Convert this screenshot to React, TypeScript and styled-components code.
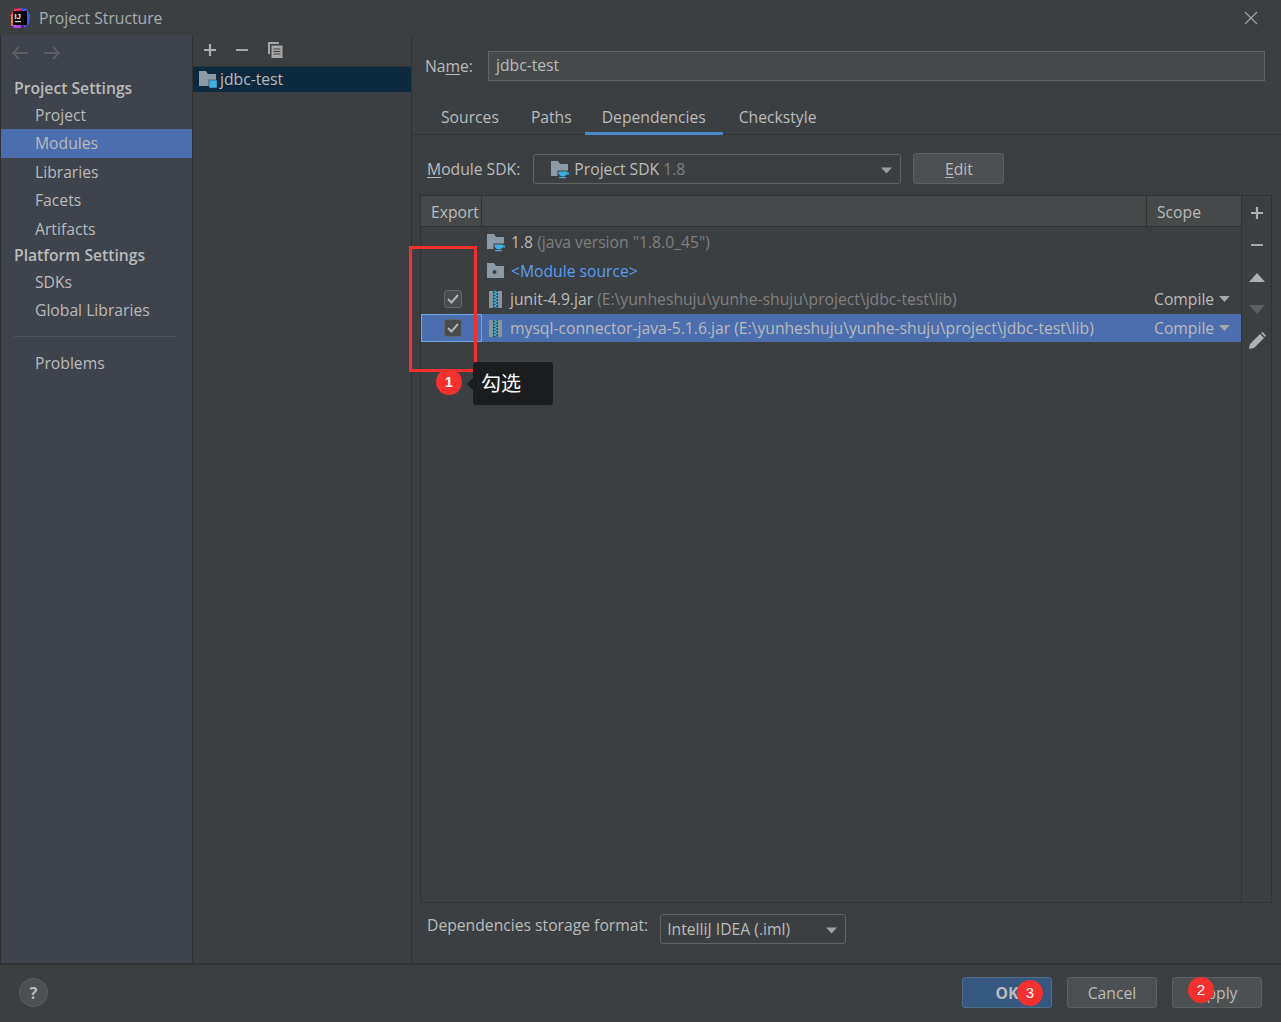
import React from "react";
import styled, { createGlobalStyle } from "styled-components";

const GlobalStyle = createGlobalStyle`
  html, body {
    margin: 0;
    padding: 0;
    background: #3c3f41;
  }
  * {
    box-sizing: border-box;
  }
`;

const Logo = () => (
  <svg width="22" height="22" viewBox="0 0 22 22">
    <path d="M1 9 L5 2 L12 1 L12 6 L5 12 Z" fill="#fe2857" />
    <path d="M11 1 L18 2 L21 8 L20 17 L15 21 L14 6 Z" fill="#3b5bf0" />
    <path d="M2 8 L6 8 L6 19 L2 19 Z" fill="#f97a12" />
    <path d="M3 18 L12 18 L12 21 L5 21 Z" fill="#b74af7" />
    <rect x="4" y="4" width="14" height="14" fill="#000" />
    <rect x="6" y="14" width="6" height="1.2" fill="#ddd" />
    <text x="5.6" y="11.5" fontSize="7.5" fontWeight="700" fill="#fff" fontFamily="Liberation Sans, sans-serif">IJ</text>
  </svg>
);

const FolderIcon = ({ cup, badge, dot }: { cup?: boolean; badge?: boolean; dot?: boolean }) => (
  <svg width="20" height="20" viewBox="0 0 20 20">
    <path d="M1 2 H8 L10 5 H18 V17 H1 Z" fill="#8c9aa5" />
    {dot && <circle cx="8.5" cy="11" r="2" fill="#3c3f41" />}
    {cup && (
      <>
        <path d="M7.5 11.5 H19.5 V19.5 H7.5 Z" fill="#3c3f41" />
        <path d="M8.5 12.5 H17 V13.5 H19 V15.5 H16.5 Q15.5 17.5 13 17.5 Q10 17.5 8.5 14.5 Z" fill="#3daee0" />
        <path d="M9 18 H16 V19.2 H9 Z" fill="#3daee0" />
      </>
    )}
    {badge && <rect x="11" y="11" width="8" height="8" fill="#3db3e6" stroke="#2b3a45" strokeWidth="0.6" />}
  </svg>
);

const JarIcon = () => (
  <svg width="19" height="18" viewBox="0 0 19 18">
    <rect x="3" y="1" width="13" height="17" fill="#8a949a" />
    <rect x="7" y="1" width="5" height="17" fill="#2f4650" />
    <path
      d="M8 1 L11 2.5 L8 4 L11 5.5 L8 7 L11 8.5 L8 10 L11 11.5 L8 13 L11 14.5 L8 16 L11 17.5"
      fill="none"
      stroke="#3fb6de"
      strokeWidth="1.2"
    />
  </svg>
);

const PlusIcon = () => (
  <svg width="14" height="14" viewBox="0 0 14 14">
    <path d="M7 1 V13 M1 7 H13" stroke="#b0b0b0" strokeWidth="2.2" />
  </svg>
);

const MinusIcon = () => (
  <svg width="14" height="14" viewBox="0 0 14 14">
    <path d="M1 7 H13" stroke="#a8a8a8" strokeWidth="2" />
  </svg>
);

const CopyIcon = () => (
  <svg width="16" height="18" viewBox="0 0 16 18">
    <path d="M1 1 H12 V3 H3 V13 H1 Z" fill="#a8a8a8" />
    <path d="M4.5 4.5 H15.5 V17 H4.5 Z" fill="#a8a8a8" />
    <path d="M6.5 8 H13.5 M6.5 10.5 H13.5 M6.5 13 H13.5" stroke="#3c3f41" strokeWidth="1.1" />
  </svg>
);

const ArrowIcon = ({ flip }: { flip?: boolean }) => (
  <svg width="18" height="14" viewBox="0 0 18 14" style={flip ? { transform: "scaleX(-1)" } : undefined}>
    <path d="M17 7 H2 M8 1 L2 7 L8 13" fill="none" stroke="#5b5e62" strokeWidth="2" />
  </svg>
);

const TriangleIcon = ({ up, color }: { up?: boolean; color: string }) => (
  <svg width="16" height="9" viewBox="0 0 16 9">
    <path d={up ? "M8 0 L16 9 H0 Z" : "M0 0 H16 L8 9 Z"} fill={color} />
  </svg>
);

const PencilIcon = () => (
  <svg width="18" height="18" viewBox="0 0 18 18">
    <path d="M1 17 L2 12 L12 2 L16 6 L6 16 Z" fill="#b0b0b0" />
    <path d="M13 1 L14.5 0 L18 3.5 L17 5 Z" fill="#b0b0b0" />
  </svg>
);

const CheckIcon = () => (
  <svg width="12" height="10" viewBox="0 0 12 10">
    <path d="M1 5 L4.5 8.5 L11 1" fill="none" stroke="#b4b4b4" strokeWidth="2" />
  </svg>
);

const settings = ["Project", "Modules", "Libraries", "Facets", "Artifacts"];
const platform = ["SDKs", "Global Libraries"];
const tabs = ["Sources", "Paths", "Dependencies", "Checkstyle"];

export default function App() {
  return (
    <>
      <GlobalStyle />
      <Window>
        <TitleBar>
          <Logo />
          <TitleText>Project Structure</TitleText>
          <CloseButton viewBox="0 0 14 14">
            <path d="M1 1 L13 13 M13 1 L1 13" stroke="#a0a0a0" strokeWidth="1.3" />
          </CloseButton>
        </TitleBar>

        <Body>
          <Sidebar>
            <NavArrows>
              <ArrowIcon />
              <ArrowIcon flip />
            </NavArrows>
            <SectionTitle>Project Settings</SectionTitle>
            {settings.map((item) => (
              <NavItem key={item} $active={item === "Modules"}>
                {item}
              </NavItem>
            ))}
            <PlatformTitle>Platform Settings</PlatformTitle>
            {platform.map((item) => (
              <NavItem key={item}>{item}</NavItem>
            ))}
            <NavDivider />
            <NavItem>Problems</NavItem>
          </Sidebar>

          <ModuleColumn>
            <ModuleToolbar>
              <PlusIcon />
              <MinusIcon />
              <CopyIcon />
            </ModuleToolbar>
            <ModuleRow>
              <FolderIcon badge />
              <span>jdbc-test</span>
            </ModuleRow>
          </ModuleColumn>

          <Detail>
            <NameRow>
              <NameLabel>
                Na<u>m</u>e:
              </NameLabel>
              <NameInput>jdbc-test</NameInput>
            </NameRow>

            <Tabs>
              {tabs.map((tab) => (
                <Tab key={tab} $active={tab === "Dependencies"}>
                  {tab}
                </Tab>
              ))}
            </Tabs>

            <SdkRow>
              <FieldLabel>
                <u>M</u>odule SDK:
              </FieldLabel>
              <SdkSelect>
                <FolderIcon cup />
                <span>
                  Project SDK <Muted>1.8</Muted>
                </span>
                <SelectCaret>
                  <TriangleIcon color="#a0a0a0" />
                </SelectCaret>
              </SdkSelect>
              <EditButton>
                <u>E</u>dit
              </EditButton>
            </SdkRow>

            <TableFrame>
              <TableMain>
                <TableHeader>
                  <ExportHead>Export</ExportHead>
                  <NameHead />
                  <ScopeHead>Scope</ScopeHead>
                </TableHeader>
                <TableRows>
                  <Row>
                    <ExportCell />
                    <EntryCell>
                      <FolderIcon cup />
                      <span>
                        1.8 <Muted>(java version "1.8.0_45")</Muted>
                      </span>
                    </EntryCell>
                  </Row>
                  <Row>
                    <ExportCell />
                    <EntryCell>
                      <FolderIcon dot />
                      <LinkText>&lt;Module source&gt;</LinkText>
                    </EntryCell>
                  </Row>
                  <Row>
                    <ExportCell>
                      <CheckBox>
                        <CheckIcon />
                      </CheckBox>
                    </ExportCell>
                    <EntryCell>
                      <JarIcon />
                      <span>
                        junit-4.9.jar <Muted>(E:\yunheshuju\yunhe-shuju\project\jdbc-test\lib)</Muted>
                      </span>
                    </EntryCell>
                    <ScopeCell>
                      Compile <TriangleIcon color="#a8a8a8" />
                    </ScopeCell>
                  </Row>
                  <Row $selected>
                    <ExportCell $focused>
                      <CheckBox>
                        <CheckIcon />
                      </CheckBox>
                    </ExportCell>
                    <EntryCell>
                      <JarIcon />
                      <span>mysql-connector-java-5.1.6.jar (E:\yunheshuju\yunhe-shuju\project\jdbc-test\lib)</span>
                    </EntryCell>
                    <ScopeCell>
                      Compile <TriangleIcon color="#a8a8a8" />
                    </ScopeCell>
                  </Row>
                </TableRows>
              </TableMain>
              <SideTools>
                <ToolSlot>
                  <PlusIcon />
                </ToolSlot>
                <ToolSlot>
                  <MinusIcon />
                </ToolSlot>
                <ToolSlot>
                  <TriangleIcon up color="#b0b0b0" />
                </ToolSlot>
                <ToolSlot>
                  <TriangleIcon color="#5b5e62" />
                </ToolSlot>
                <ToolSlot>
                  <PencilIcon />
                </ToolSlot>
              </SideTools>
            </TableFrame>

            <StorageRow>
              <StorageLabel>Dependencies storage format:</StorageLabel>
              <StorageSelect>
                <span>IntelliJ IDEA (.iml)</span>
                <SelectCaret>
                  <TriangleIcon color="#a0a0a0" />
                </SelectCaret>
              </StorageSelect>
            </StorageRow>
          </Detail>
        </Body>

        <Footer>
          <HelpButton>?</HelpButton>
          <FooterButtons>
            <OkButton>
              OK
              <OkBadge>3</OkBadge>
            </OkButton>
            <DialogButton>Cancel</DialogButton>
            <DialogButton>
              Apply
              <ApplyBadge>2</ApplyBadge>
            </DialogButton>
          </FooterButtons>
        </Footer>

        <RedBox />
        <StepBadge>1</StepBadge>
        <Tip>勾选</Tip>
      </Window>
    </>
  );
}

const Window = styled.div`
  position: relative;
  width: 1281px;
  height: 1022px;
  overflow: hidden;
  display: flex;
  flex-direction: column;
  background: #3c3f41;
  color: #bbbbbb;
  font-family: "Open Sans", "Noto Sans CJK SC", sans-serif;
  font-size: 15.7px;

  u {
    text-underline-offset: 2px;
  }
`;

const TitleBar = styled.div`
  height: 35px;
  flex: none;
  display: flex;
  align-items: center;
  padding: 0 23px 0 9px;
  gap: 8px;
`;

const TitleText = styled.span`
  flex: 1;
  color: #a9adb0;
`;

const CloseButton = styled.svg`
  width: 14px;
  height: 14px;
`;

const Body = styled.div`
  flex: 1;
  min-height: 0;
  display: flex;
`;

const Sidebar = styled.nav`
  width: 193px;
  flex: none;
  background: #3e434c;
  border-left: 1px solid #2f3133;
  border-right: 1px solid #323232;
  display: flex;
  flex-direction: column;
`;

const NavArrows = styled.div`
  height: 35px;
  flex: none;
  margin-bottom: 5px;
  display: flex;
  align-items: center;
  gap: 14px;
  padding: 0 0 0 10px;
`;

const SectionTitle = styled.div`
  height: 26px;
  line-height: 26px;
  padding-left: 13px;
  font-weight: 600;
`;

const PlatformTitle = styled(SectionTitle)`
  height: 25px;
  line-height: 25px;
`;

const NavItem = styled.div<{ $active?: boolean }>`
  height: 28.4px;
  line-height: 28px;
  padding-left: 34px;
  background: ${(p) => (p.$active ? "#4b6eaf" : "transparent")};
`;

const NavDivider = styled.div`
  height: 1px;
  flex: none;
  margin: 11px 16px 12px 13px;
  background: #505357;
`;

const ModuleColumn = styled.div`
  width: 219px;
  flex: none;
  border-right: 1px solid #323232;
`;

const ModuleToolbar = styled.div`
  height: 32px;
  display: flex;
  align-items: center;
  gap: 18px;
  padding: 0 0 2px 10px;
  border-bottom: 1px solid #323232;
`;

const ModuleRow = styled.div`
  height: 25px;
  display: flex;
  align-items: center;
  gap: 2px;
  padding: 0 0 2px 5px;
  background: #0d293e;
`;

const Detail = styled.div`
  flex: 1;
  min-width: 0;
  display: flex;
  flex-direction: column;
`;

const NameRow = styled.div`
  display: flex;
  align-items: center;
  gap: 16px;
  padding: 16px 16px 0 13px;
`;

const NameLabel = styled.span`
  width: 47px;
  white-space: nowrap;
`;

const NameInput = styled.div`
  flex: 1;
  height: 30px;
  line-height: 27px;
  padding-left: 7px;
  background: #45494a;
  border: 1px solid #646464;
`;

const Tabs = styled.div`
  display: flex;
  height: 36px;
  margin-top: 18px;
  padding-left: 13px;
  border-bottom: 1px solid #323232;
`;

const Tab = styled.div<{ $active?: boolean }>`
  height: 36px;
  line-height: 36px;
  padding: 0 ${(p) => (p.$active ? "17px" : "16px")};
  margin-left: ${(p) => (p.$active ? "-3px" : "0")};
  border-bottom: 3px solid ${(p) => (p.$active ? "#4a88c7" : "transparent")};
`;

const SdkRow = styled.div`
  display: flex;
  align-items: center;
  padding: 18px 0 0 15px;
`;

const FieldLabel = styled.span`
  white-space: nowrap;
`;

const StorageLabel = styled(FieldLabel)`
  margin-bottom: 8px;
`;

const Select = styled.div`
  position: relative;
  height: 30px;
  display: flex;
  align-items: center;
  border: 1px solid #646464;
  border-radius: 3px;
  background: #3c3f41;
`;

const SdkSelect = styled(Select)`
  width: 368px;
  margin-left: 13px;
  padding-left: 16px;
  gap: 4px;
`;

const StorageSelect = styled(Select)`
  width: 186px;
  margin-left: 12px;
  padding-left: 6px;
`;

const SelectCaret = styled.span`
  position: absolute;
  right: 8px;
  top: 12px;
  display: flex;

  svg {
    width: 11px;
    height: 7px;
  }
`;

const Muted = styled.span`
  color: #808080;
`;

const EditButton = styled.div`
  width: 91px;
  height: 31px;
  margin-left: 12px;
  line-height: 31px;
  text-align: center;
  background: #4c5052;
  border: 1px solid #5e6060;
  border-radius: 3px;
`;

const TableFrame = styled.div`
  height: 708px;
  margin: 11px 9px 0 8px;
  display: flex;
  border: 1px solid #323232;
`;

const TableMain = styled.div`
  flex: 1;
  min-width: 0;
  display: flex;
  flex-direction: column;
  border-right: 1px solid #323232;
`;

const TableHeader = styled.div`
  height: 31px;
  flex: none;
  display: flex;
  align-items: stretch;
  background: #45494a;
  border-bottom: 1px solid #323232;
`;

const ExportHead = styled.div`
  width: 61px;
  line-height: 33px;
  padding-left: 10px;
  white-space: nowrap;
  border-right: 1px solid #323232;
`;

const NameHead = styled.div`
  flex: 1;
`;

const ScopeHead = styled.div`
  width: 95px;
  line-height: 33px;
  padding-left: 10px;
  border-left: 1px solid #323232;
`;

const TableRows = styled.div`
  padding-top: 1px;
`;

const Row = styled.div<{ $selected?: boolean }>`
  height: 28.5px;
  display: flex;
  align-items: center;
  background: ${(p) => (p.$selected ? "#4b6eaf" : "transparent")};
`;

const ExportCell = styled.div<{ $focused?: boolean }>`
  width: 61px;
  height: 100%;
  flex: none;
  display: flex;
  align-items: center;
  justify-content: center;
  padding-left: 2px;
  border: 1px solid ${(p) => (p.$focused ? "#6ea8e6" : "transparent")};
`;

const CheckBox = styled.div`
  width: 18px;
  height: 18px;
  display: flex;
  align-items: center;
  justify-content: center;
  background: #474b4d;
  border: 1px solid #686868;
  border-radius: 3px;
`;

const EntryCell = styled.div`
  flex: 1;
  min-width: 0;
  display: flex;
  align-items: center;
  gap: 5px;
  padding-left: 4px;
  white-space: nowrap;
`;

const LinkText = styled.span`
  color: #589df6;
`;

const ScopeCell = styled.div`
  width: 87px;
  flex: none;
  display: flex;
  align-items: center;
  gap: 5px;
  white-space: nowrap;

  svg {
    width: 11px;
    height: 6px;
  }
`;

const SideTools = styled.div`
  width: 29px;
  flex: none;
  display: flex;
  flex-direction: column;
  align-items: stretch;
  padding-top: 1px;
`;

const ToolSlot = styled.div`
  height: 32px;
  display: flex;
  align-items: center;
  justify-content: center;
`;

const StorageRow = styled.div`
  display: flex;
  align-items: center;
  padding: 11px 0 0 15px;
`;

const Footer = styled.div`
  height: 59px;
  flex: none;
  display: flex;
  align-items: center;
  justify-content: space-between;
  padding: 0 19px 2px 19px;
  border-top: 2px solid #323232;
`;

const HelpButton = styled.div`
  width: 29px;
  height: 29px;
  line-height: 29px;
  text-align: center;
  font-weight: 700;
  font-size: 16px;
  border-radius: 50%;
  background: #4c5052;
  border: 1px solid #5e6060;
`;

const FooterButtons = styled.div`
  display: flex;
  gap: 15px;
`;

const DialogButton = styled.div`
  position: relative;
  width: 90px;
  height: 31px;
  line-height: 30px;
  text-align: center;
  background: #4c5052;
  border: 1px solid #5e6060;
  border-radius: 3px;
`;

const OkButton = styled(DialogButton)`
  background: #365880;
  border-color: #4c708c;
  font-weight: 700;
`;

const Badge = styled.span`
  position: absolute;
  width: 26px;
  height: 26px;
  line-height: 26px;
  text-align: center;
  border-radius: 50%;
  background: #f5302f;
  color: #ffffff;
  font-family: "Liberation Sans", sans-serif;
  font-weight: 400;
  font-size: 15px;
`;

const OkBadge = styled(Badge)`
  left: 54px;
  top: 2px;
`;

const ApplyBadge = styled(Badge)`
  left: 15px;
  top: -1px;
`;

const RedBox = styled.div`
  position: absolute;
  left: 409px;
  top: 246px;
  width: 68px;
  height: 126px;
  border: 3px solid #f5302f;
`;

const StepBadge = styled(Badge)`
  left: 436px;
  top: 369px;
  font-weight: 700;
  font-size: 14px;
`;

const Tip = styled.div`
  position: absolute;
  left: 473px;
  top: 362px;
  width: 80px;
  height: 43px;
  padding-left: 8px;
  line-height: 44px;
  font-size: 20px;
  color: #ffffff;
  background: #1b1c1e;
  border-radius: 3px;

  &::before {
    content: "";
    position: absolute;
    left: -6px;
    top: 16px;
    border-style: solid;
    border-width: 6px 6px 6px 0;
    border-color: transparent #1b1c1e transparent transparent;
  }
`;
